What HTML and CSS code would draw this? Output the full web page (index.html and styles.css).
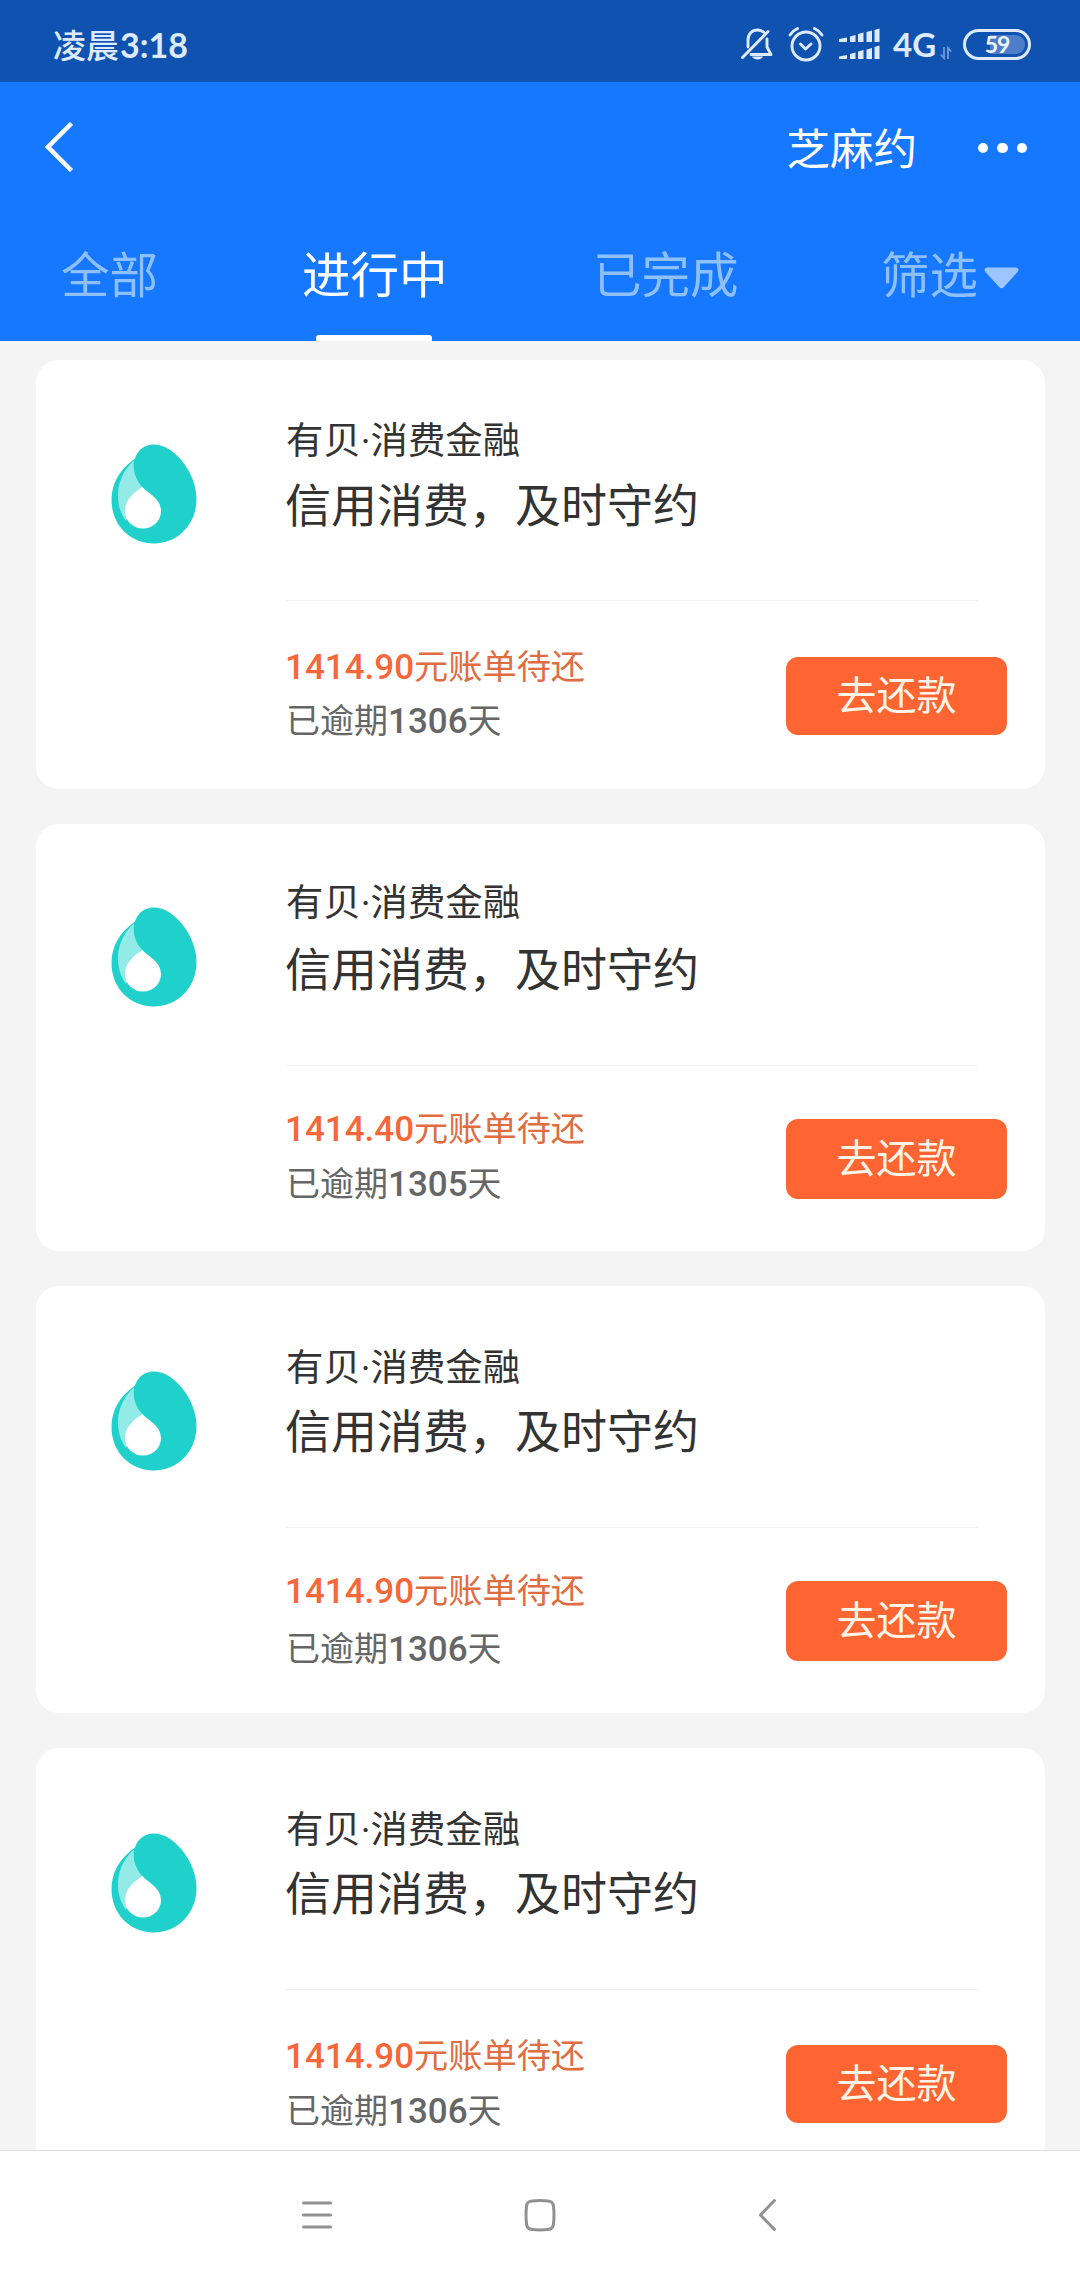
FILE: index.html
```html
<!DOCTYPE html>
<html lang="zh-CN">
<head>
<meta charset="utf-8">
<title>芝麻约</title>
<link rel="stylesheet" href="styles.css">
</head>
<body>
<svg width="0" height="0" class="defs" aria-hidden="true">
  <symbol id="drop" viewBox="0 0 86 100">
    <path fill="#20d1cb" d="M42.500 0.500C53 0.500 63 7 71 17C80 28 85.500 42 85.500 55C85.500 80 67 99.500 43 99.500C18 99.500 0.500 80 0.500 56C0.500 40 8 26 24 14.500C27 5.500 34 0.500 42.500 0.500Z"/>
    <path fill="#92ebe6" d="M23 16.500C11 27 6.500 41 7 53C7.300 62 10 70 15 77L32 44C25 36 21.500 28 23 16.500Z"/>
    <path fill="#fff" d="M31.500 43C36 49 50 54 50 67C50 77 42 84.500 32 84.500C22 84.500 14 77 14 67C14 56 23 48.500 31.500 43Z"/>
  </symbol>
</svg>
<div class="phone">
  <header class="status">
    <span class="time">凌晨<span class="clock">3:18</span></span>
    <div class="indicators">
      <svg class="bell" width="34" height="34" viewBox="0 0 34 34" fill="none" stroke="#deeaff" stroke-width="2.900" stroke-linecap="round" stroke-linejoin="round"><path d="M8 20V13C8 7 12 3 17.500 3C20 3 22 3.800 24 5.500M27 12V20L31 27.500H11M2.500 30.500L28 4.500"/><path fill="#deeaff" stroke="none" d="M12 29.500H23C21.500 33.500 13.500 33.500 12 29.500Z"/></svg>
      <svg class="alarm" width="36" height="36" viewBox="0 0 36 36" fill="none" stroke="#deeaff" stroke-width="2.900" stroke-linecap="round" stroke-linejoin="round"><circle cx="18" cy="20" r="14"/><path d="M12.500 18L17.500 23L23 18M2 9C4 6 6.500 3.800 9.500 2.500M34 9C32 6 29.500 3.800 26.500 2.500"/></svg>
      <svg class="signal" width="42" height="32" viewBox="0 0 42 32" fill="#deeaff"><path d="M0 11L8 9.500V14H0ZM11 8.500L16.500 7V14H11ZM19 6L24.500 4.500V14H19ZM27.500 4L33 2.500V14H27.500ZM35.500 2L40.500 .5V14H35.500ZM0 28.500L8 27V31H0ZM11 26L16.500 24.500V31H11ZM19 23.500L24.500 22V31H19ZM27.500 21.500L33 20V31H27.500ZM35.500 19L40.500 17.500V31H35.500Z"/></svg>
      <span class="network">4G</span>
      <svg class="data" width="12" height="14" viewBox="0 0 12 14" fill="none" stroke="#6f9bdc" stroke-width="1.800"><path d="M4 1V12L.8 8.500M8 13V2L11.200 5.500"/></svg>
      <div class="battery"><span class="level">59</span></div>
    </div>
  </header>
  <nav class="titlebar">
    <svg class="back" width="30" height="50" viewBox="0 0 30 50" fill="none" stroke="#fff" stroke-width="4.500"><path d="M27.500 1.500L4 25L27.500 48.500"/></svg>
    <h1>芝麻约</h1>
    <div class="more"><i></i><i></i><i></i></div>
  </nav>
  <div class="tabs">
    <span class="tab">全部</span>
    <span class="tab active">进行中</span>
    <span class="tab">已完成</span>
    <span class="tab filter">筛选<svg width="35" height="22" viewBox="0 0 36 22" preserveAspectRatio="none" fill="#9dc5ff"><path d="M3 .5H33Q37 1.500 34.500 5L20.500 20Q18 22.500 15.500 20L1.500 5Q-1 1.500 3 .5Z"/></svg></span>
  </div>
  <main class="list">
    <article class="card card-1">
      <svg class="logo" width="86" height="100"><use href="#drop"/></svg>
      <div class="body">
        <div class="summary"><p class="merchant">有贝·消费金融</p><h2>信用消费，及时守约</h2></div>
        <div class="bill"><div class="due"><p class="amount"><b>1414.90</b>元账单待还</p><p class="overdue">已逾期<b>1306</b>天</p></div><button>去还款</button></div>
      </div>
    </article>
    <article class="card card-2">
      <svg class="logo" width="86" height="100"><use href="#drop"/></svg>
      <div class="body">
        <div class="summary"><p class="merchant">有贝·消费金融</p><h2>信用消费，及时守约</h2></div>
        <div class="bill"><div class="due"><p class="amount"><b>1414.40</b>元账单待还</p><p class="overdue">已逾期<b>1305</b>天</p></div><button>去还款</button></div>
      </div>
    </article>
    <article class="card card-3">
      <svg class="logo" width="86" height="100"><use href="#drop"/></svg>
      <div class="body">
        <div class="summary"><p class="merchant">有贝·消费金融</p><h2>信用消费，及时守约</h2></div>
        <div class="bill"><div class="due"><p class="amount"><b>1414.90</b>元账单待还</p><p class="overdue">已逾期<b>1306</b>天</p></div><button>去还款</button></div>
      </div>
    </article>
    <article class="card card-4">
      <svg class="logo" width="86" height="100"><use href="#drop"/></svg>
      <div class="body">
        <div class="summary"><p class="merchant">有贝·消费金融</p><h2>信用消费，及时守约</h2></div>
        <div class="bill"><div class="due"><p class="amount"><b>1414.90</b>元账单待还</p><p class="overdue">已逾期<b>1306</b>天</p></div><button>去还款</button></div>
      </div>
    </article>
  </main>
  <footer class="sysnav">
    <svg width="32" height="38" viewBox="0 0 32 38" stroke="#919191" stroke-width="3" stroke-linecap="round"><path d="M2.500 7H29.500M2.500 19H29.500M2.500 31H29.500"/></svg>
    <svg width="32" height="38" viewBox="0 0 32 38" fill="none" stroke="#919191" stroke-width="3"><path d="M8 5Q16 4 24 5Q29 5.500 29.500 10Q30.500 19 29.500 28Q29 33 24 33.500Q16 34.300 8 33.500Q3 33 2.500 28Q1.500 19 2.500 10Q3 5.500 8 5Z"/></svg>
    <svg width="32" height="38" viewBox="0 0 32 38" fill="none" stroke="#919191" stroke-width="3" stroke-linecap="round" stroke-linejoin="round"><path d="M27.500 4.500L13.500 19L27.500 33.500"/></svg>
  </footer>
</div>
</body>
</html>
```
FILE: styles.css
```css
* { box-sizing: border-box; margin: 0; padding: 0; }
body { font-family: Roboto, "Noto Sans CJK SC", sans-serif; background: #f4f4f4; color: #333; }
svg { display: block; flex: none; }
.defs { display: none; }
.phone { width: 1080px; height: 2280px; display: flex; flex-direction: column; overflow: hidden; }

.status { height: 82px; flex: none; background: #1052b0; color: #deeaff; display: flex; justify-content: space-between; align-items: center; padding: 6px 49px 0 53px; }
.time { font: 500 33px/48px "Noto Sans CJK SC", sans-serif; }
.clock { font: 700 34px/48px Lato, sans-serif; margin-left: 1px; }
.indicators { display: flex; align-items: center; }
.alarm { margin-left: 14px; }
.signal { margin-left: 15px; }
.network { font: 700 33px/40px Lato, sans-serif; margin-left: 12px; width: 47px; }
.data { align-self: flex-end; margin-bottom: 4px; }
.battery { width: 68px; height: 31px; margin-left: 11px; border: 3px solid #deeaff; border-radius: 16px; padding: 3px; display: flex; }
.level { flex: 1; border-radius: 10px; background: linear-gradient(90deg, transparent 37%, #4b7dc9 37%); color: #eef4ff; text-align: center; font: 700 23px/19px Lato, sans-serif; letter-spacing: -1px; }

.titlebar { height: 132px; flex: none; background: #1677ff; color: #fff; display: flex; align-items: center; padding: 0 53px 2px 44px; }
.titlebar h1 { margin-left: auto; font: 400 43.500px/64px "Noto Sans CJK SC", sans-serif; }
.more { display: flex; gap: 9px; margin: 2px 0 0 61px; }
.more i { width: 10.300px; height: 10.300px; border-radius: 50%; background: #fff; }

.tabs { height: 127px; flex: none; background: #1677ff; color: #8ebfff; display: grid; grid-template-columns: 241px 291px 288px 1fr; padding-left: 61px; }
.tab { font: 400 48.500px/70px "Noto Sans CJK SC", sans-serif; padding-top: 23px; }
.active { color: #fff; display: flex; flex-direction: column; justify-content: space-between; }
.active::after { content: ""; width: 116px; height: 6px; border-radius: 3px 3px 1px 1px; background: #fff; margin-left: 14px; }
.filter { display: flex; align-items: flex-start; }
.filter svg { margin: 30px 0 0 6px; }

.list { flex: 1; min-height: 0; overflow: hidden; padding: 19px 35px 0 36px; display: flex; flex-direction: column; gap: 35px; }
.card {
  --logo-top: 85px;
  --merchant-top: 54px;
  --title-gap: -1px;
  --divider: 242px;
  --amount-top: 37px;
  --overdue-gap: 0px;
  --button-top: 53px;
  --button-height: 80px;
  height: 427px; flex: none; background: #fff; border-radius: 23px; display: flex; padding: 0 38px 0 75px;
}
.card-1 { --logo-top: 84px; --merchant-top: 53px; --title-gap: 0px; --divider: 241px; --amount-top: 38px; --overdue-gap: -2px; --button-top: 56px; --button-height: 78px; height: 429px; }
.card-2 { --logo-top: 83px; --merchant-top: 51px; --title-gap: 2px; --amount-top: 35px; --overdue-gap: -1px; }
.card-3 { --amount-top: 35px; --overdue-gap: 2px; }
.card-4 { --amount-top: 38px; --overdue-gap: -1px; --button-top: 55px; --button-height: 78px; }
.logo { margin-top: var(--logo-top); }
.body { margin-left: 89px; flex: 1; }
.summary { height: var(--divider); margin-right: 28px; padding-top: var(--merchant-top); border-bottom: 1px solid #f1f1f1; }
.merchant { font-size: 37.400px; line-height: 56px; }
h2 { font-weight: 400; font-size: 46px; line-height: 74px; margin: var(--title-gap) 0 0 -1px; }
.bill { display: flex; justify-content: space-between; align-items: flex-start; }
.due { padding-top: var(--amount-top); }
.amount { font-size: 34.200px; line-height: 56px; color: #e06d41; margin-left: -1px; }
.amount b { font-weight: 500; color: #f7673a; }
.overdue { font-size: 34px; line-height: 54px; color: #666; margin-top: var(--overdue-gap); }
b { font-weight: 500; font-size: 35px; }
button { width: 221px; height: var(--button-height); margin-top: var(--button-top); padding-bottom: 6px; border: 0; border-radius: 12px; background: #ff6532; color: #fff4e8; font: 400 40px/72px "Noto Sans CJK SC", sans-serif; }

.sysnav { height: 130px; flex: none; background: #fff; border-top: 1px solid #e0e0e0; display: flex; justify-content: center; align-items: center; gap: 191px; padding-bottom: 2px; }
```
